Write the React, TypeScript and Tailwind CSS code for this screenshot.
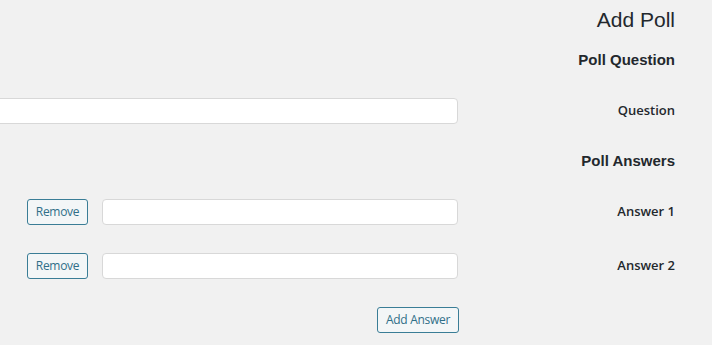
export default function App() {
  const answers = ['Answer 1', 'Answer 2'];

  return (
    <div className="h-[345px] w-[712px] overflow-hidden bg-[#f1f1f1] pr-[37px] text-[#23282d]">
      <h1 className="pt-[7px] text-right font-['Liberation_Sans',Arial,sans-serif] text-[21px] font-normal leading-[26px]">
        Add Poll
      </h1>

      <h2 className="mt-[18px] text-right font-['Liberation_Sans',Arial,sans-serif] text-[15px] font-bold leading-[18px]">
        Poll Question
      </h2>

      <div className="mt-[29px] flex items-center justify-end gap-[17px]">
        <input
          type="text"
          className="h-[26px] w-[520px] shrink-0 rounded-[4px] border border-[#d8d8d8] bg-white"
        />
        <label className="w-[200px] shrink-0 text-right font-['Open_Sans',sans-serif] text-[13px] font-semibold">
          Question
        </label>
      </div>

      <h2 className="mt-[28px] text-right font-['Liberation_Sans',Arial,sans-serif] text-[15px] font-bold leading-[18px]">
        Poll Answers
      </h2>

      <div className="mt-[29px] flex flex-col gap-[28px]">
        {answers.map((a) => (
          <div key={a} className="flex items-center justify-end gap-[17px]">
            <div className="flex items-center gap-[14px]">
              <button
                type="button"
                className="h-[26px] w-[61px] rounded-[3px] border border-[#3a7d96] bg-[#f3f6f7] font-['Open_Sans',sans-serif] text-[12px] tracking-[-0.3px] text-[#2f6f88]"
              >
                Remove
              </button>
              <input
                type="text"
                className="h-[26px] w-[356px] rounded-[4px] border border-[#d8d8d8] bg-white"
              />
            </div>
            <label className="w-[200px] shrink-0 text-right font-['Open_Sans',sans-serif] text-[13px] font-semibold">
              {a}
            </label>
          </div>
        ))}
      </div>

      <div className="mt-[28px] flex justify-end pr-[216px]">
        <button
          type="button"
          className="h-[26px] w-[82px] rounded-[3px] border border-[#3a7d96] bg-[#f3f6f7] font-['Open_Sans',sans-serif] text-[12px] tracking-[-0.3px] text-[#2f6f88]"
        >
          Add Answer
        </button>
      </div>
    </div>
  );
}
